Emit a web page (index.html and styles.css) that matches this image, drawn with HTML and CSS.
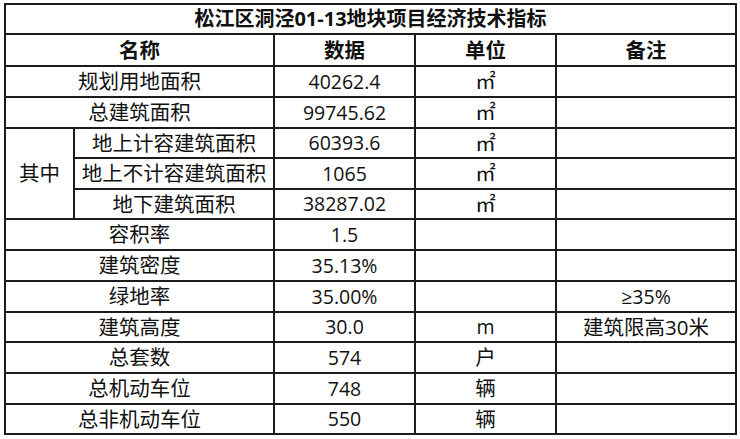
FILE: index.html
```html
<!DOCTYPE html>
<html lang="zh-CN">
<head>
<meta charset="utf-8">
<title>松江区洞泾01-13地块项目经济技术指标</title>
<link rel="stylesheet" href="styles.css">
</head>
<body>
<div class="sheet">
  <div class="cell title span5">松江区洞泾01-13地块项目经济技术指标</div>

  <div class="cell head span2">名称</div>
  <div class="cell head">数据</div>
  <div class="cell head">单位</div>
  <div class="cell head">备注</div>

  <div class="cell span2">规划用地面积</div>
  <div class="cell num">40262.4</div>
  <div class="cell">㎡</div>
  <div class="cell"></div>

  <div class="cell span2">总建筑面积</div>
  <div class="cell num">99745.62</div>
  <div class="cell">㎡</div>
  <div class="cell"></div>

  <div class="cell rows3">其中</div>
  <div class="cell">地上计容建筑面积</div>
  <div class="cell num">60393.6</div>
  <div class="cell">㎡</div>
  <div class="cell"></div>

  <div class="cell">地上不计容建筑面积</div>
  <div class="cell num">1065</div>
  <div class="cell">㎡</div>
  <div class="cell"></div>

  <div class="cell">地下建筑面积</div>
  <div class="cell num">38287.02</div>
  <div class="cell">㎡</div>
  <div class="cell"></div>

  <div class="cell span2">容积率</div>
  <div class="cell num">1.5</div>
  <div class="cell"></div>
  <div class="cell"></div>

  <div class="cell span2">建筑密度</div>
  <div class="cell num">35.13%</div>
  <div class="cell"></div>
  <div class="cell"></div>

  <div class="cell span2">绿地率</div>
  <div class="cell num">35.00%</div>
  <div class="cell"></div>
  <div class="cell num">≥35%</div>

  <div class="cell span2">建筑高度</div>
  <div class="cell num">30.0</div>
  <div class="cell num">m</div>
  <div class="cell">建筑限高30米</div>

  <div class="cell span2">总套数</div>
  <div class="cell num">574</div>
  <div class="cell">户</div>
  <div class="cell"></div>

  <div class="cell span2">总机动车位</div>
  <div class="cell num">748</div>
  <div class="cell">辆</div>
  <div class="cell"></div>

  <div class="cell span2">总非机动车位</div>
  <div class="cell num">550</div>
  <div class="cell">辆</div>
  <div class="cell"></div>
</div>
</body>
</html>
```

FILE: styles.css
```css
html, body {
  margin: 0;
  padding: 0;
  background: #ffffff;
}

body {
  font-family: "Open Sans", "Noto Sans CJK SC", sans-serif;
  color: #111111;
}

.sheet {
  margin: 3px 0 0 4px;
  width: 733px;
  display: grid;
  grid-template-columns: 67px 198px 139px 139px 178px;
  grid-template-rows: 28px 30px 29px 29px 28px 29px 28px 29px 29px 29px 28px 29px 29px 28px;
  gap: 2px;
  padding: 2px;
  box-sizing: border-box;
  background: #1c1c1c;
}

.cell {
  background: #ffffff;
  display: flex;
  align-items: center;
  justify-content: center;
  font-size: 20.5px;
  line-height: 1;
  white-space: nowrap;
  overflow: hidden;
}

.num {
  font-size: 19.5px;
}

.span2 {
  grid-column: span 2;
}

.span5 {
  grid-column: span 5;
}

.rows3 {
  grid-row: span 3;
}

.title,
.head {
  font-weight: 700;
}

.title {
  font-size: 20px;
}
```
